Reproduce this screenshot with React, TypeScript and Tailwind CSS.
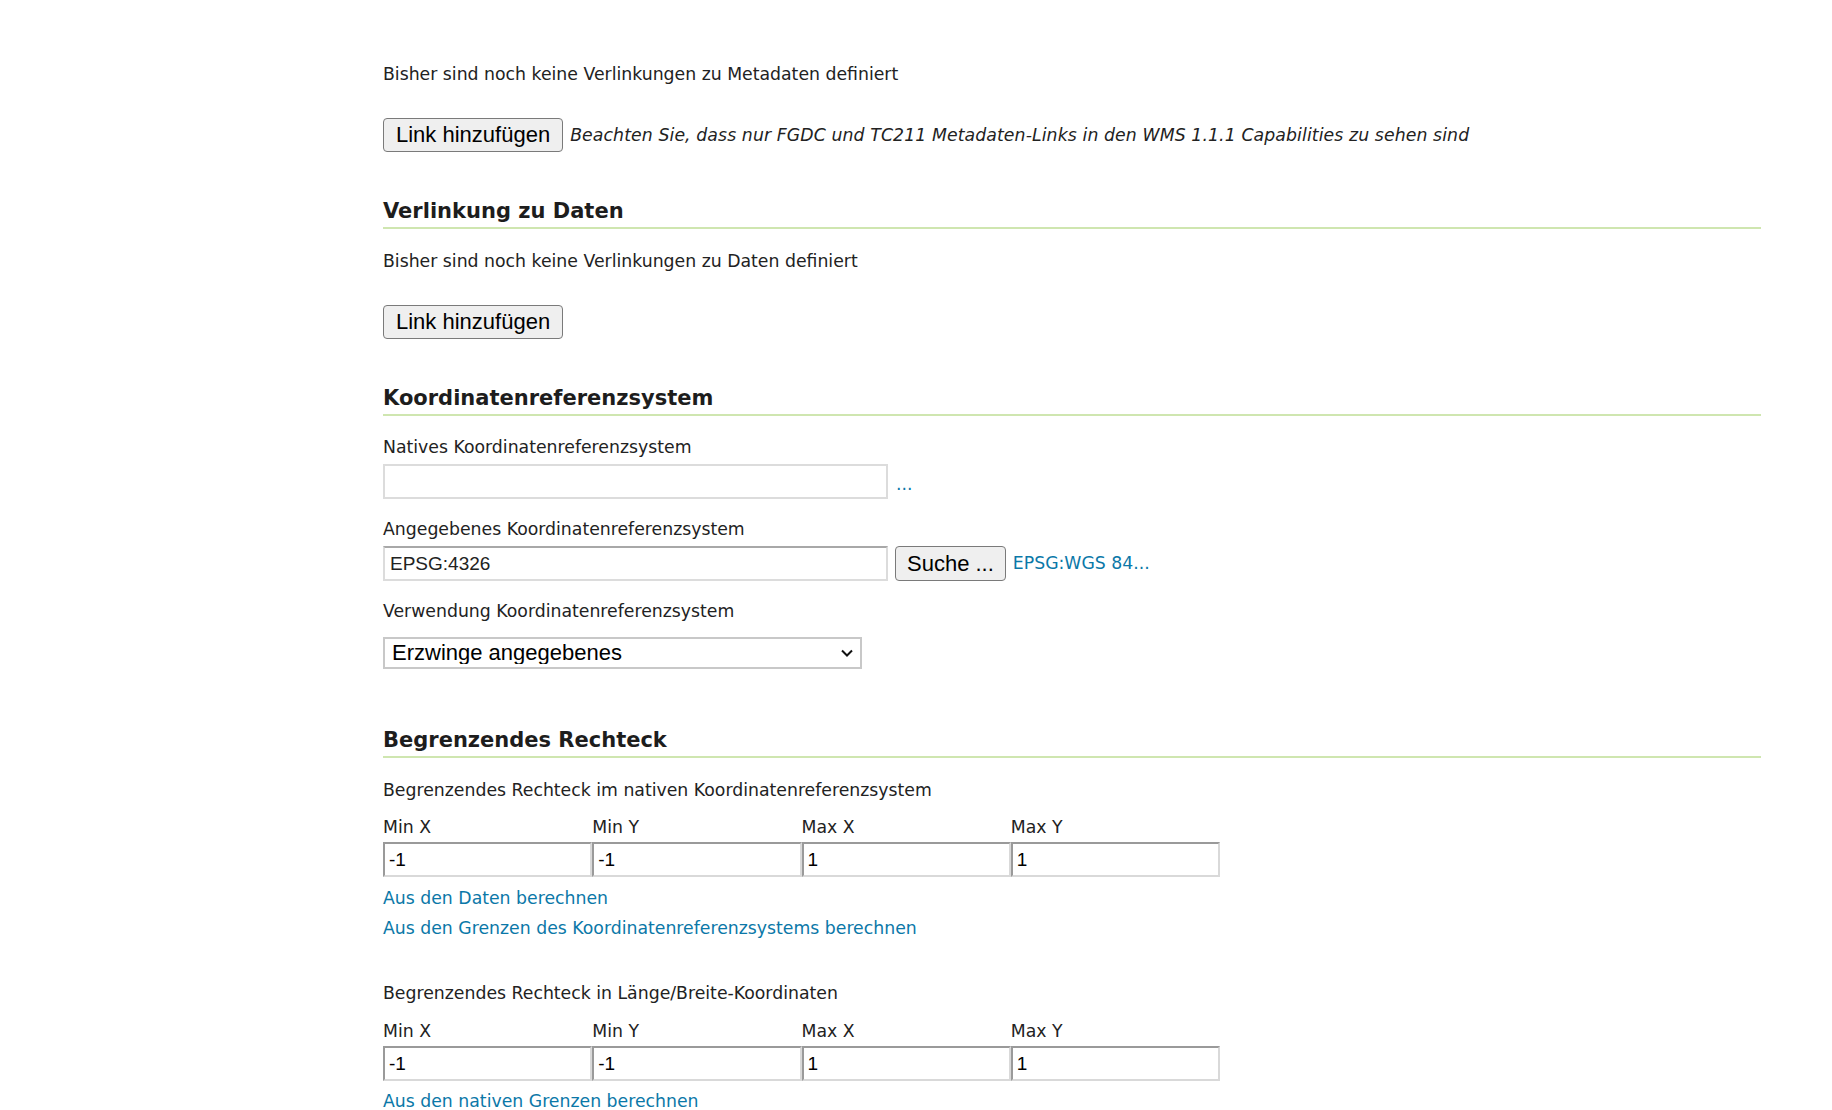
import { useState } from "react";

const label = "text-[17.3px] leading-[21px] text-[#222]";
const heading =
    "text-[21px] leading-[26px] font-bold text-[#1d1d1d] pb-[3px] border-b-2 border-[#cfe6b0]";
const link = "text-[17.3px] leading-[21px] text-[#0b78a8] hover:underline cursor-pointer";
const arial = { fontFamily: '"Liberation Sans", Arial, sans-serif' };

function LinkButton({ className = "" }: { className?: string }) {
    return (
        <button
            className={`h-[34px] px-[12px] bg-[#efefef] border border-[#7a7a7a] rounded-[4px] text-[22px] leading-none text-black ${className}`}
            style={arial}
        >
            Link hinzufügen
        </button>
    );
}

function BBox({ values }: { values: string[] }) {
    const names = ["Min X", "Min Y", "Max X", "Max Y"];
    return (
        <div className="w-[837px]">
            <div className="grid grid-cols-4">
                {names.map(n => (
                    <div key={n} className={label}>
                        {n}
                    </div>
                ))}
            </div>
            <div className="mt-[4px] grid grid-cols-4">
                {values.map((v, i) => (
                    <input
                        key={i}
                        defaultValue={v}
                        className="h-[35px] w-full px-[4px] border-2 border-[#d9d9d9] border-t-[#9a9a9a] border-l-[#9a9a9a] text-[19px] text-black outline-none"
                        style={arial}
                    />
                ))}
            </div>
        </div>
    );
}

export default function App() {
    const [usage, setUsage] = useState("force");

    return (
        <div
            className="min-h-screen bg-white"
            style={{ fontFamily: '"DejaVu Sans", Verdana, sans-serif' }}
        >
            <div className="ml-[383px] mr-[71px] pt-[64px] pb-10">

                <p className={label}>Bisher sind noch keine Verlinkungen zu Metadaten definiert</p>

                <div className="mt-[33px] flex items-center gap-[7px]">
                    <LinkButton />
                    <span className={`${label} italic tracking-[0.1px]`}>
                        Beachten Sie, dass nur FGDC und TC211 Metadaten-Links in den WMS 1.1.1 Capabilities zu sehen sind
                    </span>
                </div>

                <h3 className={`${heading} mt-[46px]`}>Verlinkung zu Daten</h3>
                <p className={`${label} mt-[22px]`}>Bisher sind noch keine Verlinkungen zu Daten definiert</p>
                <LinkButton className="mt-[33px]" />

                <h3 className={`${heading} mt-[46px]`}>Koordinatenreferenzsystem</h3>

                <div className={`${label} mt-[21px]`}>Natives Koordinatenreferenzsystem</div>
                <div className="mt-[6px] flex items-end gap-[8px]">
                    <input
                        className="h-[35px] w-[505px] px-[5px] border-2 border-[#dcdcdc] text-[19px] outline-none"
                        style={arial}
                    />
                    <span className={`${link} pb-[4px]`}>...</span>
                </div>

                <div className={`${label} mt-[20px]`}>Angegebenes Koordinatenreferenzsystem</div>
                <div className="mt-[6px] flex items-center gap-[7px]">
                    <input
                        defaultValue="EPSG:4326"
                        className="h-[35px] w-[505px] px-[5px] border-2 border-[#dcdcdc] border-t-[#a8a8a8] text-[19px] text-[#222] outline-none"
                        style={arial}
                    />
                    <button
                        className="h-[35px] px-[11px] bg-[#efefef] border border-[#7a7a7a] rounded-[4px] text-[22px] leading-none text-black"
                        style={arial}
                    >
                        Suche ...
                    </button>
                    <span className={link}>EPSG:WGS 84...</span>
                </div>

                <div className={`${label} mt-[20px]`}>Verwendung Koordinatenreferenzsystem</div>
                <div className="mt-[15px] relative w-[479px]">
                    <select
                        value={usage}
                        onChange={e => setUsage(e.target.value)}
                        className="appearance-none h-[32px] w-full pl-[7px] pr-[30px] border-2 border-[#c8c8c8] bg-white text-[22px] leading-none text-black outline-none"
                        style={arial}
                    >
                        <option value="force">Erzwinge angegebenes</option>
                        <option value="keep">Behalte natives</option>
                        <option value="reproject">Reprojiziere natives zu angegebenem</option>
                    </select>
                    <svg
                        className="pointer-events-none absolute right-[8px] top-[9px]"
                        width="14"
                        height="14"
                        viewBox="0 0 14 14"
                        fill="none"
                        stroke="#111"
                        strokeWidth="2"
                    >
                        <path d="M2 4.5 L7 9.5 L12 4.5" />
                    </svg>
                </div>

                <h3 className={`${heading} mt-[58px]`}>Begrenzendes Rechteck</h3>

                <div className={`${label} mt-[22px]`}>Begrenzendes Rechteck im nativen Koordinatenreferenzsystem</div>
                <div className="mt-[16px]">
                    <BBox values={["-1", "-1", "1", "1"]} />
                </div>
                <div className={`${link} mt-[11px]`}>Aus den Daten berechnen</div>
                <div className={`${link} mt-[9px]`}>Aus den Grenzen des Koordinatenreferenzsystems berechnen</div>

                <div className={`${label} mt-[44px]`}>Begrenzendes Rechteck in Länge/Breite-Koordinaten</div>
                <div className="mt-[17px]">
                    <BBox values={["-1", "-1", "1", "1"]} />
                </div>
                <div className={`${link} mt-[10px]`}>Aus den nativen Grenzen berechnen</div>
            </div>
        </div>
    );
}
